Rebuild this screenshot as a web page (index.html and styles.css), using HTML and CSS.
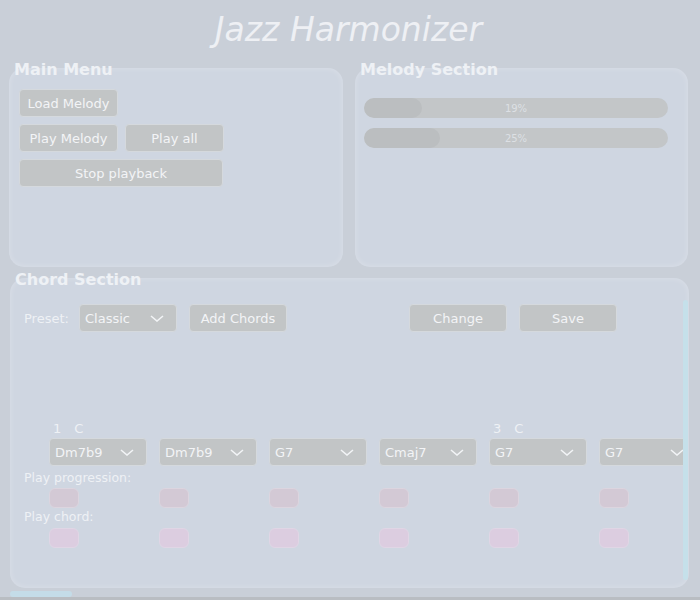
FILE: index.html
```html
<!DOCTYPE html>
<html>
<head>
<meta charset="utf-8">
<title>Jazz Harmonizer</title>
<link rel="stylesheet" href="styles.css">
</head>
<body>
<h1 class="title">Jazz Harmonizer</h1>
<div class="top-row">
  <section class="section">
    <h2 class="heading">Main Menu</h2>
    <div class="panel panel-menu">
      <div class="btn-row"><button class="btn">Load Melody</button></div>
      <div class="btn-row"><button class="btn">Play Melody</button><button class="btn">Play all</button></div>
      <div class="btn-row"><button class="btn btn-wide">Stop playback</button></div>
    </div>
  </section>
  <section class="section">
    <h2 class="heading">Melody Section</h2>
    <div class="panel panel-melody">
      <div class="progress"><div class="progress-fill" style="width:19%"></div><span class="progress-text">19%</span></div>
      <div class="progress"><div class="progress-fill" style="width:25%"></div><span class="progress-text">25%</span></div>
    </div>
  </section>
</div>
<section class="section chord-section">
  <h2 class="heading">Chord Section</h2>
  <div class="panel panel-chord">
    <div class="chord-toolbar">
      <span class="preset-label">Preset:</span>
      <div class="select"><span>Classic</span><svg class="chev" width="14" height="7" viewBox="0 0 14 7"><path d="M1 1 L7 6 L13 1" fill="none" stroke="#f2f4f6" stroke-width="1.6"/></svg></div>
      <button class="btn btn-sm">Add Chords</button>
      <button class="btn btn-sm btn-change">Change</button>
      <button class="btn btn-sm">Save</button>
    </div>
    <div class="clip">
      <div class="grid">
        <div class="bar-label"><span>1</span><span class="key">C</span></div>
        <div class="bar-label"></div>
        <div class="bar-label"></div>
        <div class="bar-label"></div>
        <div class="bar-label"><span>3</span><span class="key">C</span></div>
        <div class="bar-label"></div>

        <div class="select"><span>Dm7b9</span><svg class="chev" width="14" height="7" viewBox="0 0 14 7"><path d="M1 1 L7 6 L13 1" fill="none" stroke="#f2f4f6" stroke-width="1.6"/></svg></div>
        <div class="select"><span>Dm7b9</span><svg class="chev" width="14" height="7" viewBox="0 0 14 7"><path d="M1 1 L7 6 L13 1" fill="none" stroke="#f2f4f6" stroke-width="1.6"/></svg></div>
        <div class="select"><span>G7</span><svg class="chev" width="14" height="7" viewBox="0 0 14 7"><path d="M1 1 L7 6 L13 1" fill="none" stroke="#f2f4f6" stroke-width="1.6"/></svg></div>
        <div class="select"><span>Cmaj7</span><svg class="chev" width="14" height="7" viewBox="0 0 14 7"><path d="M1 1 L7 6 L13 1" fill="none" stroke="#f2f4f6" stroke-width="1.6"/></svg></div>
        <div class="select"><span>G7</span><svg class="chev" width="14" height="7" viewBox="0 0 14 7"><path d="M1 1 L7 6 L13 1" fill="none" stroke="#f2f4f6" stroke-width="1.6"/></svg></div>
        <div class="select"><span>G7</span><svg class="chev" width="14" height="7" viewBox="0 0 14 7"><path d="M1 1 L7 6 L13 1" fill="none" stroke="#f2f4f6" stroke-width="1.6"/></svg></div>

        <div class="row-label">Play progression:</div>
        <div class="pill pill-prog"></div><div class="pill pill-prog"></div><div class="pill pill-prog"></div><div class="pill pill-prog"></div><div class="pill pill-prog"></div><div class="pill pill-prog"></div>

        <div class="row-label row-label-2">Play chord:</div>
        <div class="pill pill-chord"></div><div class="pill pill-chord"></div><div class="pill pill-chord"></div><div class="pill pill-chord"></div><div class="pill pill-chord"></div><div class="pill pill-chord"></div>
      </div>
    </div>
    <div class="vscroll"></div>
  </div>
  <div class="hscroll"></div>
</section>
<div class="bottom-strip"></div>
</body>
</html>
```
FILE: styles.css
```css
html, body {
  margin: 0;
  padding: 0;
  height: 100%;
  overflow: hidden;
}
body {
  background: #c9cfd8;
  font-family: "DejaVu Sans", Verdana, sans-serif;
  color: #f0f2f5;
  padding: 11px 12px 0 9px;
  box-sizing: border-box;
  position: relative;
}
.title {
  margin: 0;
  text-align: center;
  font-size: 33px;
  line-height: 38px;
  font-weight: normal;
  font-style: italic;
  color: #eef0f4;
}
.top-row {
  display: grid;
  grid-template-columns: 334px 333px;
  column-gap: 12px;
  margin-top: 11px;
}
.heading {
  position: relative;
  z-index: 2;
  margin: 0 0 -12px 5px;
  font-size: 16px;
  line-height: 20px;
  font-weight: bold;
  color: #eef1f5;
}
.panel {
  background: #cfd6e1;
  border-radius: 15px;
  box-shadow: inset 0 0 6px rgba(255,255,255,0.25);
}
.panel-menu {
  height: 199px;
  box-sizing: border-box;
  padding: 21px 10px;
  display: flex;
  flex-direction: column;
  gap: 7px;
}
.btn-row {
  display: flex;
  gap: 7px;
}
.btn {
  width: 99px;
  height: 28px;
  box-sizing: border-box;
  background: #c2c5c6;
  border: 1px solid #d5d9dd;
  border-radius: 4px;
  color: #f3f4f6;
  font-family: "DejaVu Sans", Verdana, sans-serif;
  font-size: 13px;
  padding: 0;
  margin: 0;
}
.btn-sm { width: 98px; }
.btn-wide { width: 204px; }
.panel-melody {
  height: 199px;
  box-sizing: border-box;
  padding: 30px 20px 0 9px;
  display: flex;
  flex-direction: column;
  gap: 10px;
}
.progress {
  position: relative;
  height: 20px;
  border-radius: 10px;
  background: #c3c6c8;
  overflow: hidden;
  display: flex;
  align-items: center;
  justify-content: center;
}
.progress-fill {
  position: absolute;
  left: 0;
  top: 0;
  bottom: 0;
  background: #bbbec0;
  border-radius: 10px;
}
.progress-text {
  position: relative;
  font-size: 10px;
  color: #dde0e4;
}
.chord-section {
  margin-top: 3px;
  width: 679px;
  margin-left: 1px;
}
.panel-chord {
  position: relative;
  height: 310px;
  box-sizing: border-box;
  padding: 26px 5px 0 14px;
  overflow: hidden;
}
.chord-toolbar {
  display: flex;
  align-items: center;
  gap: 12px;
}
.preset-label {
  width: 43px;
  font-size: 13px;
  color: #eef1f5;
}
.btn-change { margin-left: 110px; }
.select {
  width: 98px;
  height: 28px;
  box-sizing: border-box;
  background: #c2c5c6;
  border: 1px solid #d5d9dd;
  border-radius: 4px;
  display: flex;
  align-items: center;
  justify-content: space-between;
  padding: 0 12px 0 5px;
  font-size: 13px;
  color: #f3f4f6;
  flex-shrink: 0;
}
.chev { display: block; }
.clip {
  overflow: hidden;
  margin-top: 89px;
}
.grid {
  display: grid;
  grid-template-columns: repeat(6, 98px);
  column-gap: 12px;
  padding-left: 25px;
  width: 750px;
}
.bar-label {
  height: 16px;
  line-height: 16px;
  font-size: 13px;
  padding-left: 4px;
  margin-bottom: 1px;
  color: #eef1f5;
  display: flex;
  gap: 13px;
}
.row-label {
  grid-column: 1 / -1;
  margin-left: -25px;
  margin-top: 4px;
  height: 16px;
  line-height: 16px;
  font-size: 12.5px;
  margin-bottom: 2px;
  color: #eef1f5;
}
.row-label-2 { margin-top: 1px; margin-bottom: 3px; }
.pill {
  width: 30px;
  height: 20px;
  box-sizing: border-box;
  border-radius: 6px;
}
.pill-prog {
  background: #d3c9d5;
  border: 1px solid #dcd5df;
}
.pill-chord {
  background: #dccde0;
  border: 1px solid #e0d6e5;
}
.vscroll {
  position: absolute;
  right: 1px;
  top: 22px;
  width: 5px;
  height: 280px;
  border-radius: 3px;
  background: #c5e0ea;
}
.hscroll {
  width: 62px;
  height: 6px;
  border-radius: 3px;
  background: #c4dce8;
  margin-top: 3px;
}
.bottom-strip {
  position: absolute;
  left: 0;
  right: 0;
  bottom: 0;
  height: 3px;
  background: #b9bdc2;
}
```
